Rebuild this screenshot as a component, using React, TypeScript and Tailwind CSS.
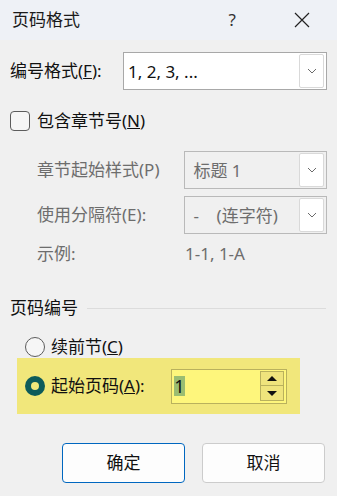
import React from 'react'

const font = "font-['Noto_Sans','Noto_Sans_CJK_SC',sans-serif]"

function Chevron() {
  return (
    <svg width="10" height="6" viewBox="0 0 10 6" fill="none">
      <path d="M1 1l4 4 4-4" stroke="#6b6b6b" strokeWidth="1" />
    </svg>
  )
}

function Select({ value, disabled }: { value: string; disabled?: boolean }) {
  return (
    <div
      className={`flex h-[38px] items-center border pl-[4px] pr-[2px] ${
        disabled ? 'border-[#b9b9b9] bg-[#f0f0f0] text-[#6d6d6d]' : 'border-[#a8a8a8] bg-white text-[#111]'
      }`}
    >
      <span className="flex-1 whitespace-pre text-[17px] leading-none">{value}</span>
      <div className="flex h-[34px] w-[25px] items-center justify-center rounded-[2px] border border-[#d9d9d9] bg-white">
        <Chevron />
      </div>
    </div>
  )
}

export default function App() {
  return (
    <div className={`h-[496px] w-[337px] overflow-hidden bg-[#f0f0f0] text-[17px] ${font}`}>
      <div className="flex h-[40px] items-center bg-[#eef1f6] pl-[12px]">
        <span className="flex-1 text-[17px] text-[#1a1a1a]">页码格式</span>
        <span className="mr-[58px] text-[17px] text-[#333]">?</span>
        <svg width="16" height="16" viewBox="0 0 16 16" className="mr-[27px]">
          <path d="M1 1l14 14M15 1L1 15" stroke="#222" strokeWidth="1.2" />
        </svg>
      </div>

      <div className="mt-[12px] flex items-center pl-[10px] pr-[10px]">
        <span className="w-[113px] text-[#111]">
          编号格式(<span className="underline">F</span>):
        </span>
        <div className="flex-1">
          <Select value="1, 2, 3, ..." />
        </div>
      </div>

      <div className="mt-[21px] flex h-[20px] items-center pl-[10px]">
        <div className="h-[20px] w-[20px] rounded-[4px] border border-[#5c5c5c] bg-[#f6f6f6]" />
        <span className="ml-[7px] text-[#111]">
          包含章节号(<span className="underline">N</span>)
        </span>
      </div>

      <div className="mt-[20px] flex items-center pl-[37px] pr-[10px]">
        <span className="w-[147px] text-[#6d6d6d]">章节起始样式(P)</span>
        <div className="flex-1">
          <Select value=" 标题 1" disabled />
        </div>
      </div>

      <div className="mt-[7px] flex items-center pl-[37px] pr-[10px]">
        <span className="w-[147px] text-[#6d6d6d]">使用分隔符(E):</span>
        <div className="flex-1">
          <Select value=" -    (连字符)" disabled />
        </div>
      </div>

      <div className="mt-[10px] flex h-[20px] items-center pl-[37px]">
        <span className="w-[148px] text-[#6d6d6d]">示例:</span>
        <span className="text-[#6d6d6d]">1-1, 1-A</span>
      </div>

      <div className="mt-[34px] flex h-[20px] items-center pl-[10px] pr-[11px]">
        <span className="text-[#111]">页码编号</span>
        <div className="ml-[9px] h-px flex-1 bg-[#dcdcdc]" />
      </div>

      <div className="mt-[19px] flex h-[20px] items-center pl-[25px]">
        <div className="h-[20px] w-[20px] rounded-full border border-[#5c5c5c] bg-[#f6f6f6]" />
        <span className="ml-[6px] text-[#111]">
          续前节(<span className="underline">C</span>)
        </span>
      </div>

      <div className="ml-[17px] mt-px flex h-[56px] w-[283px] items-center bg-[#f1e77b] pl-[8px]">
        <div className="flex h-[20px] w-[20px] items-center justify-center rounded-full bg-[#0d5b5a]">
          <div className="h-[8px] w-[8px] rounded-full bg-[#f1e77b]" />
        </div>
        <span className="ml-[6px] w-[120px] text-[#111]">
          起始页码(<span className="underline">A</span>):
        </span>
        <div className="flex h-[35px] w-[116px] items-center border border-[#b9b15d] bg-[#fef67c] pl-[2px] pr-[2px]">
          <span className="flex h-[20px] w-[11px] items-center justify-center bg-[#9bbd72] text-[18px] leading-none text-[#111]">1</span>
          <div className="flex-1" />
          <div className="flex w-[24px] flex-col">
            <div className="flex h-[15px] items-center justify-center border border-[#b9b15d] bg-[#efe47c]">
              <svg width="10" height="5" viewBox="0 0 10 5"><path d="M0 5L5 0l5 5z" fill="#111" /></svg>
            </div>
            <div className="flex h-[15px] items-center justify-center border border-t-0 border-[#b9b15d] bg-[#efe47c]">
              <svg width="10" height="5" viewBox="0 0 10 5"><path d="M0 0h10L5 5z" fill="#111" /></svg>
            </div>
          </div>
        </div>
      </div>

      <div className="mt-[29px] flex gap-[17px] pl-[62px]">
        <button className="h-[40px] w-[123px] rounded-[4px] border border-[#0067c0] bg-[#fdfdfd] text-[#111]">
          确定
        </button>
        <button className="h-[40px] w-[123px] rounded-[4px] border border-[#cccccc] bg-[#fdfdfd] text-[#111]">
          取消
        </button>
      </div>
    </div>
  )
}
